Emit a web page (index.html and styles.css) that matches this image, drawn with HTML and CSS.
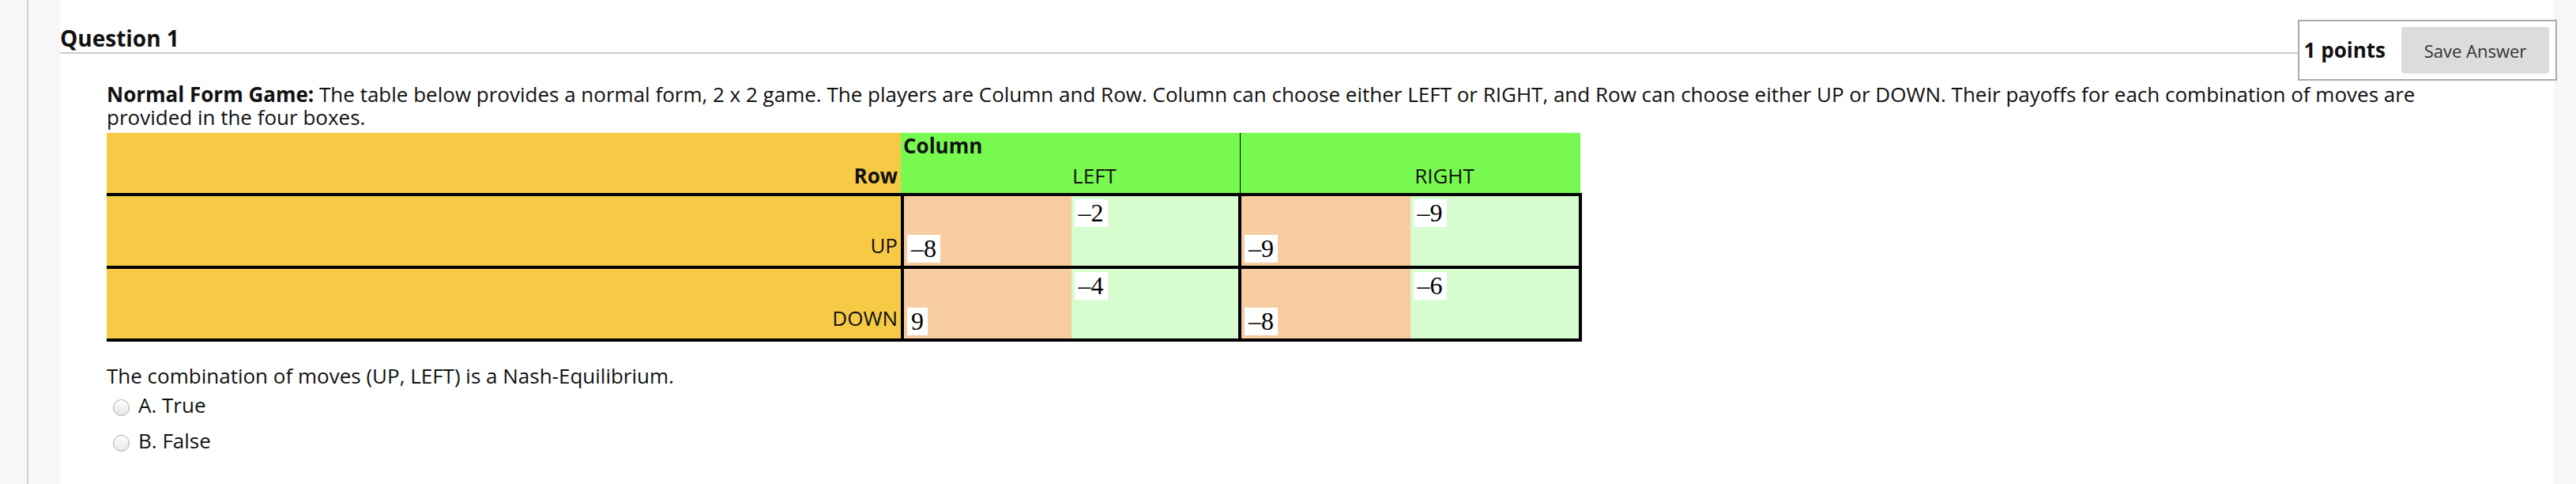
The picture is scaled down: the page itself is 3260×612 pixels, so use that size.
FILE: index.html
```html
<!DOCTYPE html>
<html lang="en">
<head>
<meta charset="utf-8">
<title>Question 1</title>
<link rel="stylesheet" href="styles.css">
</head>
<body>
<div class="page">
  <aside class="gutter"></aside>
  <main class="panel">
    <div class="qhead">
      <h2 class="qtitle">Question 1</h2>
      <div class="points">
        <span class="pts">1 points</span>
        <button class="save" type="button">Save Answer</button>
      </div>
    </div>
    <div class="qbody">
      <p class="prompt"><b>Normal Form Game:</b> The table below provides a normal form, 2 x 2 game. The players are Column and Row. Column can choose either LEFT or RIGHT, and Row can choose either UP or DOWN. Their payoffs for each combination of moves are provided in the four boxes.</p>
      <div class="game">
        <div class="ghead">
          <div class="lbl bold">Row</div>
          <div class="gcol gcol-left">
            <span class="bold">Column</span>
            <span class="colname pad-left">LEFT</span>
          </div>
          <div class="gcol gcol-right">
            <span class="colname pad-right">RIGHT</span>
          </div>
        </div>
        <div class="grow first">
          <div class="lbl">UP</div>
          <div class="pay pay-left">
            <div class="half rowp"><span class="num">–8</span></div>
            <div class="half colp"><span class="num">–2</span></div>
          </div>
          <div class="pay pay-right">
            <div class="half rowp"><span class="num">–9</span></div>
            <div class="half colp"><span class="num">–9</span></div>
          </div>
        </div>
        <div class="grow">
          <div class="lbl">DOWN</div>
          <div class="pay pay-left">
            <div class="half rowp"><span class="num">9</span></div>
            <div class="half colp"><span class="num">–4</span></div>
          </div>
          <div class="pay pay-right">
            <div class="half rowp"><span class="num">–8</span></div>
            <div class="half colp"><span class="num">–6</span></div>
          </div>
        </div>
      </div>
      <p class="stem">The combination of moves (UP, LEFT) is a Nash-Equilibrium.</p>
      <ul class="opts">
        <li class="opt"><span class="radio"></span><span>A. True</span></li>
        <li class="opt"><span class="radio"></span><span>B. False</span></li>
      </ul>
    </div>
  </main>
  <aside class="rgutter"></aside>
</div>
</body>
</html>
```

FILE: styles.css
```css
* { box-sizing: border-box; }

html, body {
  margin: 0;
  padding: 0;
  background: #f7f7f7;
}

body {
  font-family: "Open Sans", "Noto Sans", sans-serif;
  color: #111;
}

.page {
  display: flex;
  height: 612px;
  overflow: hidden;
}

.gutter {
  width: 76px;
  flex: none;
  background: linear-gradient(to right, #f7f7f7 34px, #d2d2d2 34px, #d2d2d2 36px, #f7f7f7 36px);
}

.rgutter {
  width: 28px;
  flex: none;
  background: #f7f7f7;
}

.panel {
  flex: 1;
  background: #fff;
  position: relative;
}

.qhead {
  padding-top: 31px;
  padding-bottom: 1px;
  border-bottom: 2px solid #cccccc;
}

.qtitle {
  margin: 0;
  font-size: 28px;
  font-weight: 700;
  line-height: 34px;
  color: #111;
}

.points {
  position: absolute;
  top: 25px;
  right: -4px;
  display: flex;
  align-items: center;
  gap: 20px;
  padding: 7px 8px 7px 6px;
  border: 2px solid #ababab;
  background: #fff;
}

.pts {
  font-size: 26px;
  font-weight: 700;
  line-height: 29px;
  color: #111;
}

.save {
  height: 59px;
  width: 187px;
  padding: 0;
  border: none;
  border-radius: 4px;
  background: #dcdcdc;
  color: #333;
  font-family: "Open Sans", sans-serif;
  font-size: 22px;
}

.qbody {
  padding: 37px 122px 0 59px;
  font-size: 26px;
  line-height: 29px;
}

.prompt {
  margin: 0;
}

.prompt b, .bold {
  font-weight: 700;
}

.game {
  margin-top: 5px;
  display: flex;
  flex-direction: column;
  align-items: flex-start;
}

.ghead {
  display: flex;
  height: 76px;
}

.lbl {
  width: 1005px;
  flex: none;
  background: #f7ca46;
  display: flex;
  justify-content: flex-end;
  align-items: flex-end;
  padding: 0 4px 7px 0;
}

.gcol {
  background: #78f94f;
  display: flex;
  flex-direction: column;
  justify-content: space-between;
  padding: 2px 0 7px 3px;
}

.gcol-left {
  width: 430px;
  border-right: 1px solid #000;
}

.gcol-right {
  width: 430px;
  justify-content: flex-end;
}

.colname {
  text-align: center;
}

.pad-left { padding-left: 58px; }
.pad-right { padding-left: 83px; }

.grow {
  display: flex;
  height: 92px;
  border-bottom: 4px solid #000;
}

.grow.first {
  height: 96px;
  border-top: 4px solid #000;
}

.grow .lbl {
  padding: 0 4px 11px 0;
}

.pay {
  display: flex;
  border-left: 4px solid #000;
}

.pay-left { width: 427px; }
.pay-right { width: 435px; border-right: 4px solid #000; }

.half {
  flex: 1 1 0;
  display: flex;
  padding: 4px;
}

.rowp {
  background: #f7cca0;
  align-items: flex-end;
}

.colp {
  background: #d7fcd0;
  align-items: flex-start;
}

.num {
  background: #fff;
  font-family: "Liberation Serif", "Times New Roman", serif;
  font-size: 32px;
  line-height: 35px;
  padding: 0 5px;
  color: #000;
}

.stem {
  margin: 29px 0 0 0;
}

.opts {
  list-style: none;
  margin: 0;
  padding: 0;
}

.opt {
  display: flex;
  align-items: center;
  gap: 11px;
  padding: 8px 0 8px 8px;
}

.radio {
  width: 21px;
  height: 21px;
  flex: none;
  border-radius: 50%;
  border: 1px solid #a9a9a9;
  background: linear-gradient(to bottom, #ffffff, #e6e6e6);
  margin-top: 6px;
}
```
